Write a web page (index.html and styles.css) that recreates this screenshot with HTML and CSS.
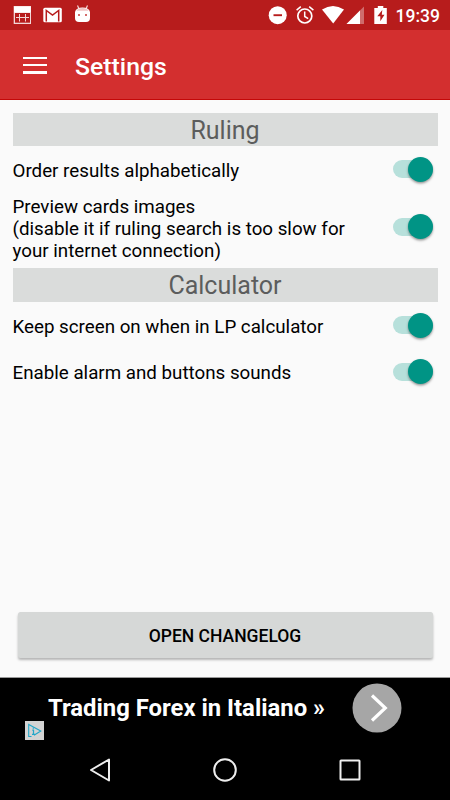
FILE: index.html
```html
<!DOCTYPE html>
<html lang="en">
<head>
  <meta charset="utf-8">
  <title>Settings</title>
  <link rel="stylesheet" href="styles.css">
</head>
<body>
  <div class="status-bar">
    <svg class="status-icons" width="100" height="30" viewBox="0 0 100 30">
      <!-- calendar -->
      <rect x="13.700" y="6" width="17.300" height="18" fill="#f3d6d6"/>
      <rect x="14" y="6.500" width="16.700" height="6" fill="#fff"/>
      <path d="M15 13h15v9.700h-15z" fill="#b71c1c"/>
      <path d="M16 17.500h13M19.500 14v7.500M25.500 14v7.500" stroke="#f3d6d6" stroke-width="1"/>
      <!-- mail -->
      <rect x="43.300" y="7.700" width="18.500" height="14.500" rx="1.500" fill="#fff"/>
      <path d="M46.300 21.500V10.500L52.500 15L58.700 10.500V21.500" fill="none" stroke="#b71c1c" stroke-width="1.500"/>
      <!-- android -->
      <path d="M77.500 5.500l1.800 4M87.500 5.500l-1.800 4" stroke="#f3d6d6" stroke-width="1.200"/>
      <path d="M75 12q1-4.500 7.500-4.500T90 12v6q0 4-4 4h-7q-4 0-4-4z" fill="#fff"/>
      <path d="M76.500 10.800q1.500-2.800 6-2.800t6 2.800z" fill="#f0c4c4"/>
      <path d="M78 14h2v2h-2zM85 14h2v2h-2z" fill="#d56b6b"/>
    </svg>
    <div class="status-right">
      <svg width="125" height="30" viewBox="265 0 125 30">
        <circle cx="277.700" cy="15.200" r="9" fill="#fff"/>
        <path d="M273.500 15.200h8.500" stroke="#b71c1c" stroke-width="1.900"/>
        <!-- alarm -->
        <circle cx="304.800" cy="16" r="7" fill="none" stroke="#fff" stroke-width="1.700"/>
        <path d="M304.700 11.500v5l3.500 2.100M296.600 10.100l4.200-3.500M313.400 10.100l-4.200-3.500" fill="none" stroke="#fff" stroke-width="1.500"/>
        <!-- wifi and signal -->
        <path d="M322 9.500Q333 2.500 344 9.500L333.200 23.500z" fill="#fff"/>
        <path d="M346.500 24L364 6.500V24z" fill="#cf6c6c"/>
        <path d="M346.500 24L360 10.500V24z" fill="#fff"/>
        <!-- battery -->
        <path d="M374.300 8h3.500V6h5.500v2h3.500v16h-12.500z" fill="#fff"/>
        <path d="M382.300 10l-5 6.300h3v4.900l4.200-6.500h-2.700z" fill="#b71c1c"/>
      </svg>
      <span class="time">19:39</span>
    </div>
  </div>

  <div class="toolbar">
    <div class="menu-icon"><span></span><span></span><span></span></div>
    <h1>Settings</h1>
  </div>

  <div class="content">
    <h2>Ruling</h2>
    <div class="row first">
      <span>Order results alphabetically</span>
      <div class="switch"><div class="knob"></div></div>
    </div>
    <div class="row tall">
      <span>Preview cards images<br>(disable it if ruling search is too slow for<br>your internet connection)</span>
      <div class="switch"><div class="knob"></div></div>
    </div>
    <h2>Calculator</h2>
    <div class="row">
      <span>Keep screen on when in LP calculator</span>
      <div class="switch"><div class="knob"></div></div>
    </div>
    <div class="row">
      <span>Enable alarm and buttons sounds</span>
      <div class="switch"><div class="knob"></div></div>
    </div>
    <button type="button" class="changelog">OPEN CHANGELOG</button>
  </div>

  <div class="ad">
    <span class="ad-text">Trading Forex in Italiano »</span>
    <svg class="ad-arrow" width="50" height="50" viewBox="0 0 50 50">
      <circle cx="25" cy="25" r="24.500" fill="#a6a6a6"/>
      <path d="M20 12.500L33.300 25L20 37.500" fill="none" stroke="#fff" stroke-width="3.200"/>
    </svg>
    <svg class="ad-choices" width="19" height="19" viewBox="0 0 19 19">
      <rect width="19" height="19" fill="#d3d3d3"/>
      <path d="M6.500 15.500H3.700V3.500L15.800 10L9 14.200" fill="none" stroke="#21a6c9" stroke-width="1.100"/>
      <path d="M8.300 6.500v1.300M7.300 9.200h1.200v4M7 13.300h3" fill="none" stroke="#21a6c9" stroke-width="1.200"/>
    </svg>
  </div>

  <div class="nav-bar">
    <svg width="26" height="26" viewBox="0 0 26 26"><path d="M22 2.500V23.500L4 13z"/></svg>
    <svg width="26" height="26" viewBox="0 0 26 26"><circle cx="13" cy="13" r="10.800"/></svg>
    <svg width="26" height="26" viewBox="0 0 26 26"><rect x="3.500" y="3.500" width="19" height="19" rx=".5"/></svg>
  </div>
</body>
</html>
```

FILE: styles.css
```css
body {
  font-family: Roboto, "Liberation Sans", sans-serif;
  margin: 0;
  width: 450px;
  height: 800px;
  display: flex;
  flex-direction: column;
  overflow: hidden;
  background-color: #fafafa;
  color: #000;
}

svg {
  display: block;
  flex: none;
}

.status-bar {
  height: 30px;
  flex: none;
  display: flex;
  justify-content: space-between;
  background-color: #b71c1c;
}

.status-right {
  display: flex;
  align-items: center;
  width: 185px;
}

.time {
  margin-left: 5.5px;
  padding-top: 1px;
  color: #fff;
  font-size: 17.5px;
  font-weight: 500;
}

.toolbar {
  height: 70px;
  flex: none;
  box-sizing: border-box;
  display: flex;
  align-items: center;
  padding-left: 23px;
  background-color: #d32f2f;
  border-bottom: 1px solid #c40808;
}

.menu-icon {
  width: 24px;
  height: 17px;
  margin-top: 1px;
  display: flex;
  flex-direction: column;
  justify-content: space-between;
}

.menu-icon span {
  height: 2.5px;
  background-color: #fff;
}

.toolbar h1 {
  margin: 3px 0 0 28px;
  color: #fff;
  font-size: 24.8px;
  font-weight: 500;
}

.content {
  flex: 1;
  display: flex;
  flex-direction: column;
  padding: 12.5px 12.5px 19.5px;
}

.content h2 {
  height: 33.5px;
  margin: 0 0 1px;
  background-color: #dadcdb;
  color: #5c5d5d;
  font-size: 25px;
  font-weight: 400;
  line-height: 36.5px;
  text-align: center;
}

.row {
  height: 46.5px;
  display: flex;
  align-items: center;
  justify-content: space-between;
  font-size: 18.75px;
  line-height: 22px;
}

.row span {
  padding-top: 2px;
}

.row.first {
  height: 46px;
}

.row.tall {
  height: 69px;
  margin-bottom: 6px;
}

.switch {
  width: 40px;
  height: 18px;
  margin: 0 4.5px 1.5px 0;
  display: flex;
  align-items: center;
  justify-content: flex-end;
  border-radius: 9px;
  background-color: #b7e0db;
}

.knob {
  width: 25px;
  height: 25px;
  flex: none;
  border-radius: 50%;
  background-color: #009485;
  box-shadow: 0 1.5px 2.5px rgba(0, 0, 0, 0.4);
}

.changelog {
  height: 45.5px;
  margin: auto 5px 0;
  padding-top: 3px;
  border: none;
  border-radius: 2.5px;
  background-color: #d6d8d7;
  box-shadow: 0 2px 2.5px rgba(0, 0, 0, 0.28);
  color: #000;
  font-family: inherit;
  font-size: 17.5px;
  font-weight: 500;
}

.ad {
  position: relative;
  height: 62px;
  flex: none;
  display: flex;
  align-items: flex-start;
  justify-content: space-between;
  padding: 0 48px;
  background-color: #000;
  border-top: 1px solid #999;
}

.ad-text {
  padding-top: 16px;
  color: #fff;
  font-size: 23.85px;
  font-weight: 700;
  line-height: 28px;
}

.ad-arrow {
  margin-top: 5px;
}

.ad-choices {
  position: absolute;
  left: 25px;
  top: 43px;
}

.nav-bar {
  height: 60px;
  flex: none;
  display: flex;
  justify-content: space-between;
  align-items: center;
  padding: 0 87px;
  background-color: #000;
}

.nav-bar svg {
  fill: none;
  stroke: #eee;
  stroke-width: 2;
  stroke-linejoin: round;
}
```
